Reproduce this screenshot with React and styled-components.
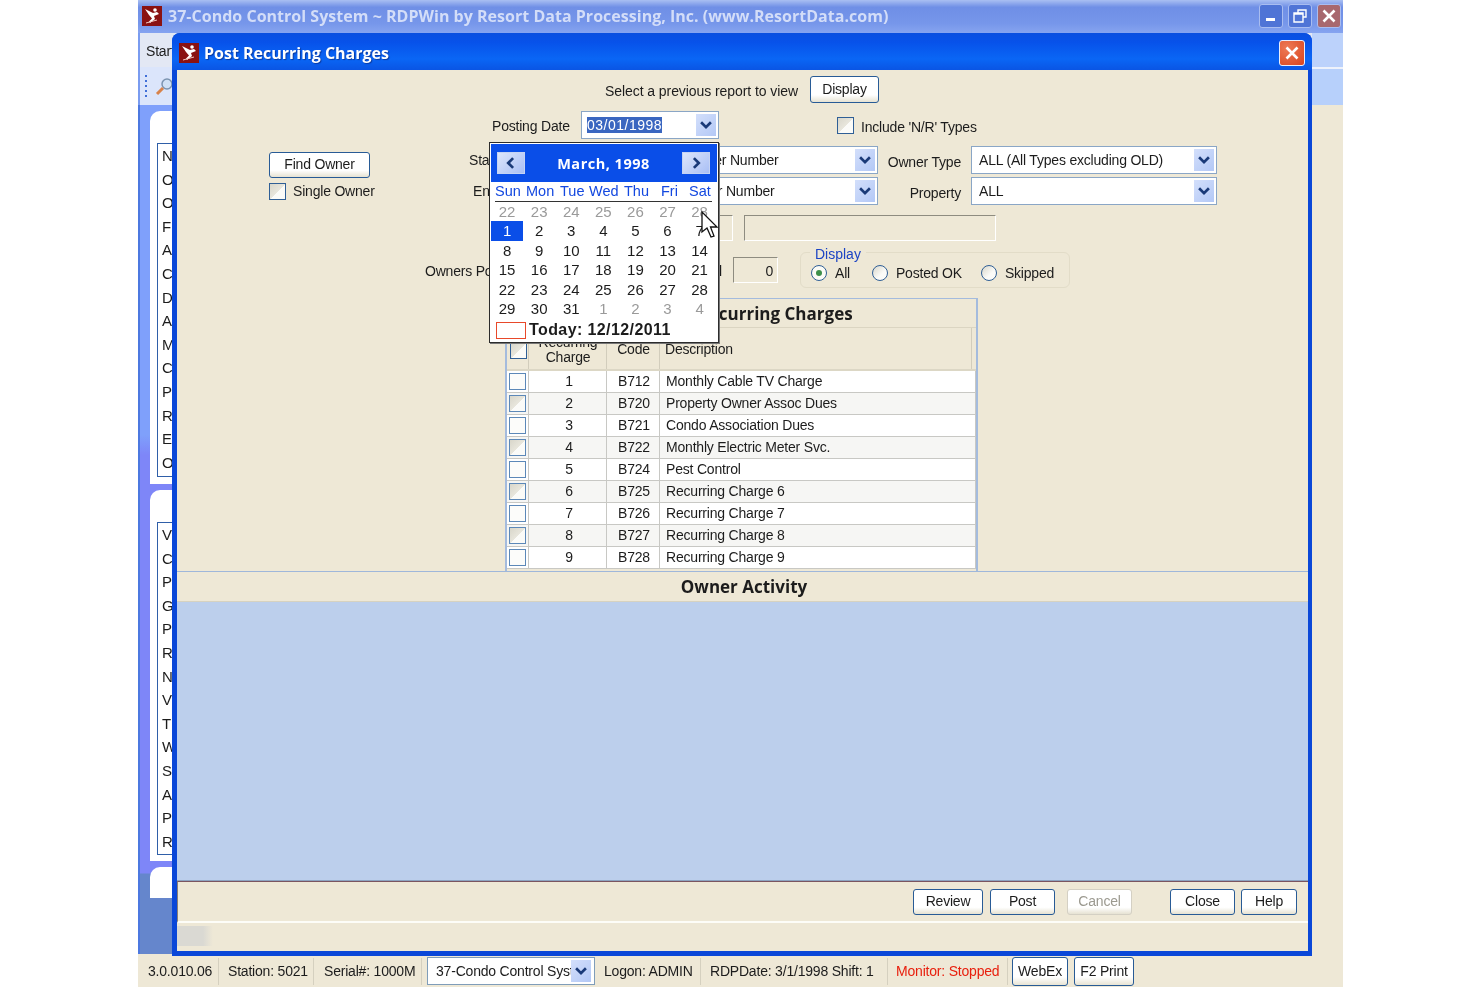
import React from "react";
import styled, { createGlobalStyle } from "styled-components";

const GlobalStyle = createGlobalStyle`
  html, body {
    margin: 0;
    padding: 0;
    background: #fff;
    font-family: "Liberation Sans", Arial, sans-serif;
    font-size: 14px;
    letter-spacing: -0.2px;
    color: #1c1c1c;
  }
`;

const Page = styled.div`
  width: 1480px;
  height: 987px;
  overflow: hidden;
  padding-left: 138px;
  box-sizing: border-box;
`;

const AppWindow = styled.div`
  position: relative;
  width: 1205px;
  height: 987px;
  display: flex;
  flex-direction: column;
  background: #eee8d6;
  filter: blur(0.35px);
`;

const AppTitle = styled.div`
  height: 33px;
  flex: none;
  display: flex;
  align-items: center;
  padding: 0 2px 1px 4px;
  box-sizing: border-box;
  background: linear-gradient(180deg, #a9bff2 0, #6f8fe6 22%, #7696ea 70%, #86a4f0 100%);
  color: #d3ddf8;
  font-family: "Open Sans", sans-serif;
  font-weight: 700;
  font-size: 16px;
  letter-spacing: 0.02px;
  white-space: nowrap;
`;

const AppTitleText = styled.span`
  margin-left: 6px;
  flex: 1;
`;

const WinBtn = styled.div`
  width: 24px;
  height: 24px;
  margin-left: 5px;
  border: 1px solid #a9bdf0;
  border-radius: 3px;
  box-sizing: border-box;
  background: ${(p) => (p.$red ? "#a8686e" : "#4f74d6")};
  display: flex;
  align-items: center;
  justify-content: center;
`;

const AppBody = styled.div`
  flex: 1;
  display: flex;
  min-height: 0;
`;

const LeftSide = styled.div`
  width: 1174px;
  flex: none;
  display: flex;
  flex-direction: column;
`;

const TabRow = styled.div`
  height: 34px;
  flex: none;
  background: #e3e8f4;
  border-left: 2px solid #7a9cf0;
  padding: 10px 0 0 6px;
  box-sizing: border-box;
  font-size: 14px;
`;

const ToolRow = styled.div`
  height: 38px;
  flex: none;
  background: #dbe5fb;
  border-left: 2px solid #7a9cf0;
  display: flex;
  align-items: center;
  gap: 8px;
  padding-left: 5px;
  box-sizing: border-box;
`;

const Grip = styled.div`
  width: 2px;
  height: 22px;
  background: repeating-linear-gradient(180deg, #3f6fd8 0 2px, transparent 2px 5px);
`;

const SideBar = styled.div`
  flex: 1;
  width: 34px;
  overflow: hidden;
  background: linear-gradient(180deg, #7fa0fb 0, #7fa0fb 330px, #7e86f8 350px, #7e86f8 768px, #6586cc 769px);
  border-left: 2px solid #4c78e0;
  padding: 6px 0 0 10px;
  box-sizing: border-box;
  display: flex;
  flex-direction: column;
  gap: 6px;
`;

const SidePanel = styled.div`
  background: #fff;
  border-radius: 10px 0 0 0;
  height: ${(p) => p.$h}px;
  flex: none;
  padding: ${(p) => p.$pad}px 0 0 7px;
  box-sizing: border-box;
`;

const SideList = styled.div`
  border: 1px solid #2f5fa8;
  border-right: none;
  height: ${(p) => p.$h}px;
  padding-left: 4px;
  box-sizing: border-box;
`;

const SideItem = styled.div`
  height: 23.6px;
  line-height: 23.6px;
  font-size: 15px;
`;

const Beyond = styled.div`
  flex: 1;
  display: flex;
  flex-direction: column;
`;

const Beyond1 = styled.div`
  height: 34px;
  background: #bcd2fb;
  border-bottom: 2px solid #eef2fb;
  flex: none;
`;

const Beyond2 = styled.div`
  height: 36px;
  background: #b7d0fb;
  flex: none;
`;

const StatusBar = styled.div`
  height: 33px;
  flex: none;
  display: flex;
  align-items: center;
  background: #eee8d6;
  font-size: 14px;
  white-space: nowrap;
`;

const StatusCell = styled.div`
  height: 27px;
  margin-top: 2px;
  box-sizing: border-box;
  width: ${(p) => p.$w}px;
  padding-left: ${(p) => p.$pad}px;
  line-height: 26px;
  color: ${(p) => p.$color || "#1c1c1c"};
  border-right: ${(p) => (p.$line ? "1px solid #d5d0bf" : "none")};
  flex: none;
`;

const StatusCombo = styled.div`
  width: 168px;
  height: 28px;
  margin-right: 9px;
  flex: none;
  border: 1px solid #7f9db9;
  background: #fff;
  display: flex;
  align-items: center;
  padding-left: 8px;
  box-sizing: border-box;
  overflow: hidden;
`;

const StatusComboText = styled.span`
  width: 135px;
  overflow: hidden;
  white-space: nowrap;
`;

const StatusBtn = styled.div`
  width: ${(p) => p.$w}px;
  margin-right: 6px;
  height: 29px;
  margin-top: 2px;
  line-height: 27px;
  text-align: center;
  border: 1.5px solid #285b96;
  border-radius: 3px;
  box-sizing: border-box;
  background: linear-gradient(180deg, #fff 70%, #e8e4d4);
  flex: none;
`;

const Dialog = styled.div`
  position: absolute;
  left: 34px;
  top: 33px;
  width: 1140px;
  height: 923px;
  display: flex;
  flex-direction: column;
  background: #0a47d8;
  border-radius: 8px 8px 0 0;
  padding: 0 4px 5px 5px;
  box-sizing: border-box;
`;

const DialogTitle = styled.div`
  height: 37px;
  flex: none;
  margin: 0 -4px 0 -5px;
  padding: 3px 7px 0 7px;
  box-sizing: border-box;
  display: flex;
  align-items: center;
  border-radius: 8px 8px 0 0;
  background: linear-gradient(180deg, #0a4fe0 0, #0752ea 25%, #0a66f5 70%, #0a55e4 100%);
  color: #fff;
  font-family: "Open Sans", sans-serif;
  font-weight: 700;
  font-size: 16px;
  letter-spacing: 0;
  text-shadow: 1px 1px 1px #0b3aa0;
`;

const DialogTitleText = styled.span`
  margin-left: 5px;
  flex: 1;
`;

const RedClose = styled.div`
  width: 26px;
  height: 26px;
  border: 1px solid #e8eefc;
  border-radius: 3px;
  box-sizing: border-box;
  background: radial-gradient(circle at 30% 30%, #ee7a55, #d8441f);
  display: flex;
  align-items: center;
  justify-content: center;
`;

const DialogBody = styled.div`
  position: relative;
  flex: 1;
  display: flex;
  flex-direction: column;
  background: #eee8d6;
  min-height: 0;
`;

const Form = styled.div`
  height: 501px;
  flex: none;
  padding-top: 6px;
  box-sizing: border-box;
  display: flex;
  flex-direction: column;
`;

const Row = styled.div`
  display: flex;
  align-items: center;
  height: ${(p) => p.$h}px;
  margin-top: ${(p) => p.$mt || 0}px;
  padding-left: ${(p) => p.$pl || 0}px;
  flex: none;
`;

const OwnerGrid = styled.div`
  display: grid;
  grid-template-columns: 200px 112px 297px 93px 246px;
  grid-template-rows: 28px 28px;
  row-gap: 3px;
  margin-top: 7px;
  padding-left: 92px;
  align-items: center;
`;

const Label = styled.span`
  white-space: nowrap;
  margin-left: ${(p) => p.$ml || 0}px;
  padding-top: ${(p) => p.$pt || 0}px;
  width: ${(p) => (p.$w ? `${p.$w}px` : "auto")};
  flex: none;
`;

const ReportLabel = styled(Label)`
  letter-spacing: -0.07px;
`;

const RightLabel = styled.span`
  text-align: right;
  padding-right: 10px;
  padding-top: 4px;
  white-space: nowrap;
`;

const Button = styled.div`
  width: ${(p) => p.$w}px;
  height: ${(p) => p.$h || 26}px;
  margin-left: ${(p) => p.$ml || 0}px;
  margin-top: ${(p) => p.$mt || 0}px;
  line-height: ${(p) => (p.$h || 26) - 3}px;
  text-align: center;
  border: 1.5px solid ${(p) => (p.$off ? "#d4d0c4" : "#285b96")};
  color: ${(p) => (p.$off ? "#9c9a90" : "#1c1c1c")};
  border-radius: 3px;
  box-sizing: border-box;
  background: linear-gradient(180deg, #fff 72%, #e6e2d2);
  flex: none;
`;

const Combo = styled.div`
  width: ${(p) => p.$w}px;
  height: 28px;
  margin-left: ${(p) => p.$ml || 0}px;
  border: 1px solid #8aa6c6;
  background: #fff;
  display: flex;
  align-items: center;
  justify-content: space-between;
  padding: 0 2px 0 ${(p) => p.$pad || 7}px;
  box-sizing: border-box;
  flex: none;
`;

const Selected = styled.span`
  background: #3a66c0;
  color: #fff;
  line-height: 16px;
  letter-spacing: 0.5px;
`;

const Arrow = styled.div`
  width: 20px;
  height: 22px;
  background: linear-gradient(135deg, #d3dffb, #b3c8f6);
  display: flex;
  align-items: center;
  justify-content: center;
  flex: none;
`;

const Check = styled.div`
  width: 17px;
  height: 17px;
  border: 1.5px solid ${(p) => (p.$soft ? "#5c88b8" : "#2f5f96")};
  box-sizing: border-box;
  margin-left: ${(p) => p.$ml || 0}px;
  background: ${(p) =>
    p.$plain ? "#fcfcfa" : "linear-gradient(135deg, #d8d6ca 0, #e8e6dc 50%, #fbfbf8 52%)"};
  flex: none;
`;

const CheckLabel = styled.div`
  display: flex;
  align-items: center;
  gap: 7px;
  margin-left: ${(p) => p.$ml || 0}px;
  padding-top: ${(p) => p.$pt || 0}px;
`;

const Sunken = styled.div`
  width: ${(p) => p.$w}px;
  height: ${(p) => p.$h}px;
  margin-left: ${(p) => p.$ml || 0}px;
  margin-top: ${(p) => p.$mt || 0}px;
  border: 1px solid #fff;
  border-top-color: #8e8c80;
  border-left-color: #8e8c80;
  box-sizing: border-box;
  text-align: right;
  padding: 5px 4px 0 0;
  flex: none;
`;

const Group = styled.div`
  position: relative;
  width: 270px;
  height: 36px;
  margin-left: 22px;
  margin-top: 2px;
  border: 1px solid #e2dcc8;
  border-radius: 6px;
  box-sizing: border-box;
  display: flex;
  align-items: center;
  padding: 6px 0 0 10px;
  flex: none;
`;

const Legend = styled.span`
  position: absolute;
  left: 9px;
  top: -7px;
  padding: 0 5px;
  background: #eee8d6;
  color: #1c44c4;
  letter-spacing: 0;
`;

const RadioWrap = styled.div`
  display: flex;
  align-items: center;
  gap: 8px;
  margin-right: ${(p) => p.$mr}px;
`;

const Radio = styled.div`
  width: 16px;
  height: 16px;
  border: 1.5px solid #2f5f96;
  border-radius: 50%;
  box-sizing: border-box;
  background: ${(p) => (p.$on ? "#fbfbf6" : "linear-gradient(135deg, #d8d6ca, #fbfbf8 60%)")};
  display: flex;
  align-items: center;
  justify-content: center;
  flex: none;
`;

const Dot = styled.div`
  width: 6px;
  height: 6px;
  border-radius: 50%;
  background: #3d8f4a;
`;

const TablePanel = styled.div`
  width: 473px;
  margin: 10px 0 0 328px;
  flex: 1;
  border: 2px solid #a4bbdd;
  border-bottom: none;
  border-top: 1px solid #a4bbdd;
  box-sizing: border-box;
  display: flex;
  flex-direction: column;
  background: #eee8d6;
`;

const BoldTitle = styled.div`
  height: ${(p) => p.$h}px;
  line-height: ${(p) => p.$h}px;
  flex: none;
  text-align: center;
  padding-left: ${(p) => p.$pl || 0}px;
  font-family: "Open Sans", sans-serif;
  font-weight: 700;
  font-size: 17px;
  letter-spacing: 0;
  color: #1c1c1c;
  box-sizing: border-box;
  border-bottom: 1px solid #dbd5c2;
`;

const TableHead = styled.div`
  height: 43px;
  flex: none;
  display: grid;
  grid-template-columns: 22px 78px 53px 1fr 4px;
  background: #eee8d6;
  border-bottom: 2px solid #dcd7c5;
  box-sizing: border-box;
`;

const HeadCell = styled.div`
  border-right: 1px solid #d2cdbc;
  text-align: ${(p) => p.$align || "center"};
  line-height: 15px;
  padding: ${(p) => p.$top}px 0 0 ${(p) => p.$pl || 0}px;
  overflow: hidden;
  box-sizing: border-box;
`;

const TableRow = styled.div`
  height: 22px;
  flex: none;
  display: grid;
  grid-template-columns: 22px 78px 53px 1fr;
  background: ${(p) => (p.$alt ? "#f6f6f4" : "#fff")};
  border-bottom: 1px solid #c8c8c4;
  box-sizing: border-box;
`;

const Cell = styled.div`
  border-right: 1px solid #c8c8c4;
  text-align: ${(p) => p.$align || "left"};
  line-height: 21px;
  padding-left: ${(p) => p.$pl || 0}px;
  display: ${(p) => (p.$box ? "flex" : "block")};
  align-items: center;
  justify-content: center;
  box-sizing: border-box;
  white-space: nowrap;
`;

const ActivityPanel = styled.div`
  height: 280px;
  flex: none;
  background: #bccfec;
  border-top: 1px solid #d6d2c0;
  border-bottom: 1px solid #8da3c0;
  box-sizing: border-box;
`;

const ActivityHead = styled(BoldTitle)`
  border-top: 1px solid #9fb7da;
  border-bottom: none;
`;

const ActionBar = styled.div`
  height: 42px;
  flex: none;
  display: flex;
  align-items: center;
  padding: 0 10px 0 735px;
  box-sizing: border-box;
  border-top: 1px solid #7a5560;
  border-left: 1px solid #8a7f74;
  border-bottom: 2px solid #fdfdf8;
`;

const BottomStrip = styled.div`
  flex: 1;
  background: linear-gradient(90deg, #dad9d3 0, #dad9d3 26px, #eee8d6 36px);
  background-size: 100% 20px;
  background-repeat: no-repeat;
  background-position: 0 3px;
`;

const Calendar = styled.div`
  position: absolute;
  left: 312px;
  top: 72px;
  width: 230px;
  height: 201px;
  border: 1px solid #2c2c2c;
  background: #fff;
  padding: 1px;
  box-sizing: border-box;
  box-shadow: 1px 1px 0 #777;
`;

const CalHead = styled.div`
  height: 38px;
  background: #0a4ee8;
  display: flex;
  align-items: center;
  justify-content: space-between;
  padding: 0 7px 0 6px;
  color: #fff;
  font-family: "Open Sans", sans-serif;
  font-weight: 700;
  font-size: 14.5px;
  letter-spacing: 0.5px;
`;

const CalNav = styled.div`
  width: 28px;
  height: 22px;
  background: linear-gradient(135deg, #dde6fb, #a9bff5);
  border: 1px solid #c5d3f3;
  box-sizing: border-box;
  display: flex;
  align-items: center;
  justify-content: center;
`;

const Weekdays = styled.div`
  margin: 1px 5px 0 4px;
  height: 18px;
  display: grid;
  grid-template-columns: 31px 34px 29px 35px 37px 28px 1fr;
  border-bottom: 1.5px solid #333;
  color: #1348e0;
  line-height: 17px;
  font-size: 14.5px;
  letter-spacing: 0;
`;

const DayGrid = styled.div`
  display: grid;
  grid-template-columns: repeat(7, 32.1px);
  grid-auto-rows: 19.4px;
`;

const Day = styled.div`
  text-align: center;
  line-height: 19px;
  font-size: 15px;
  letter-spacing: 0;
  background: ${(p) => (p.$sel ? "#0a4ee8" : "transparent")};
  color: ${(p) => (p.$sel ? "#fff" : p.$dim ? "#9a9a9a" : "#1c1c1c")};
`;

const TodayRow = styled.div`
  display: flex;
  align-items: center;
  gap: 3px;
  padding-left: 5px;
  margin-top: 3px;
  font-weight: 700;
  font-size: 16px;
  letter-spacing: 0.4px;
`;

const TodayBox = styled.div`
  width: 30px;
  height: 17px;
  border: 1.5px solid #e8492a;
  box-sizing: border-box;
`;

const Cursor = styled.svg`
  position: absolute;
  left: 524px;
  top: 141px;
`;

const Chevron = ({ dir = "down", size = 14 }) => {
  const d = {
    down: "M1.5 3 L5 6.5 L8.5 3",
    left: "M6.5 1.5 L3 5 L6.5 8.5",
    right: "M3.5 1.5 L7 5 L3.5 8.5",
  }[dir];
  return (
    <svg width={size} height={size} viewBox="0 0 10 10">
      <path d={d} fill="none" stroke="#1a3a78" strokeWidth="1.9" />
    </svg>
  );
};

const Logo = () => (
  <svg width="20" height="20" viewBox="0 0 20 20" style={{ flex: "none" }}>
    <rect width="20" height="20" fill="#8a1212" />
    <circle cx="13" cy="4" r="1.8" fill="#fff" />
    <path d="M3 3 L11 7 L15 6 L17 8 L12 10 L13 13 L8 17 L7 15.5 L10 12.5 L7 9 Z" fill="#fff" />
    <path d="M4 17 L15 14" stroke="#f3c9c0" strokeWidth="1" />
  </svg>
);

const XMark = ({ size = 16 }) => (
  <svg width={size} height={size} viewBox="0 0 16 16">
    <path d="M2.5 2.5 L13.5 13.5 M13.5 2.5 L2.5 13.5" stroke="#fff" strokeWidth="2.6" />
  </svg>
);

const LIST_ONE = ["N", "O", "O", "F", "A", "C", "D", "A", "M", "C", "P", "R", "E", "O"];
const LIST_TWO = ["V", "C", "P", "G", "P", "R", "N", "V", "T", "W", "S", "A", "P", "R"];

const CHARGES = [
  ["1", "B712", "Monthly Cable TV Charge"],
  ["2", "B720", "Property Owner Assoc Dues"],
  ["3", "B721", "Condo Association Dues"],
  ["4", "B722", "Monthly Electric Meter Svc."],
  ["5", "B724", "Pest Control"],
  ["6", "B725", "Recurring Charge 6"],
  ["7", "B726", "Recurring Charge 7"],
  ["8", "B727", "Recurring Charge 8"],
  ["9", "B728", "Recurring Charge 9"],
];

const WEEKDAYS = ["Sun", "Mon", "Tue", "Wed", "Thu", "Fri", "Sat"];

const DAYS = [
  ...[22, 23, 24, 25, 26, 27, 28].map((n) => ({ n, dim: true })),
  ...Array.from({ length: 31 }, (_, i) => ({ n: i + 1, sel: i === 0 })),
  ...[1, 2, 3, 4].map((n) => ({ n, dim: true })),
];

const App = () => {
  return (
    <Page>
      <GlobalStyle />
      <AppWindow>
        <AppTitle>
          <Logo />
          <AppTitleText>
            37-Condo Control System ~ RDPWin by Resort Data Processing, Inc. (www.ResortData.com)
          </AppTitleText>
          <WinBtn>
            <svg width="16" height="16" viewBox="0 0 16 16">
              <rect x="3" y="10" width="9" height="3" fill="#fff" />
            </svg>
          </WinBtn>
          <WinBtn>
            <svg width="16" height="16" viewBox="0 0 16 16">
              <path d="M6 4.5V2h8v7h-3M2 5h9v9H2z M2 6h9" fill="none" stroke="#fff" strokeWidth="1.4" />
            </svg>
          </WinBtn>
          <WinBtn $red>
            <XMark />
          </WinBtn>
        </AppTitle>

        <AppBody>
          <LeftSide>
            <TabRow>Start</TabRow>
            <ToolRow>
              <Grip />
              <svg width="20" height="20" viewBox="0 0 20 20">
                <circle cx="12" cy="8" r="5" fill="#cfe0f5" stroke="#7b93b0" strokeWidth="1.5" />
                <path d="M8 12 L2 18" stroke="#d8824a" strokeWidth="3" />
              </svg>
            </ToolRow>
            <SideBar>
              <SidePanel $h={373} $pad={32}>
                <SideList $h={334}>
                  {LIST_ONE.map((t, i) => (
                    <SideItem key={i}>{t}</SideItem>
                  ))}
                </SideList>
              </SidePanel>
              <SidePanel $h={371} $pad={32}>
                <SideList $h={333}>
                  {LIST_TWO.map((t, i) => (
                    <SideItem key={i}>{t}</SideItem>
                  ))}
                </SideList>
              </SidePanel>
              <SidePanel $h={31} $pad={0} />
            </SideBar>
          </LeftSide>
          <Beyond>
            <Beyond1 />
            <Beyond2 />
          </Beyond>
        </AppBody>

        <StatusBar>
          <StatusCell $w={81} $pad={10} $line>3.0.010.06</StatusCell>
          <StatusCell $w={95} $pad={9} $line>Station: 5021</StatusCell>
          <StatusCell $w={108} $pad={10} $line>Serial#: 1000M</StatusCell>
          <StatusCell $w={5} />
          <StatusCombo>
            <StatusComboText>37-Condo Control System</StatusComboText>
            <Arrow>
              <Chevron />
            </Arrow>
          </StatusCombo>
          <StatusCell $w={97} $line>Logon: ADMIN</StatusCell>
          <StatusCell $w={187} $pad={9} $line>RDPDate: 3/1/1998 Shift: 1</StatusCell>
          <StatusCell $w={120} $pad={8} $color="#e8200e" $line>Monitor: Stopped</StatusCell>
          <StatusCell $w={4} />
          <StatusBtn $w={56}>WebEx</StatusBtn>
          <StatusBtn $w={60}>F2 Print</StatusBtn>
        </StatusBar>

        <Dialog>
          <DialogTitle>
            <Logo />
            <DialogTitleText>Post Recurring Charges</DialogTitleText>
            <RedClose>
              <XMark />
            </RedClose>
          </DialogTitle>
          <DialogBody>
            <Form>
              <Row $h={27} $pl={428}>
                <ReportLabel $w={205} $pt={2}>Select a previous report to view</ReportLabel>
                <Button $w={69} $h={27}>Display</Button>
              </Row>
              <Row $h={28} $mt={8} $pl={315}>
                <Label $w={89} $pt={2}>Posting Date</Label>
                <Combo $w={138} $pad={5}>
                  <Selected>03/01/1998</Selected>
                  <Arrow>
                    <Chevron />
                  </Arrow>
                </Combo>
                <CheckLabel $ml={118}>
                  <Check />
                  <Label $pt={3}>Include 'N/R' Types</Label>
                </CheckLabel>
              </Row>
              <OwnerGrid>
                <Button $w={101} $mt={9}>Find Owner</Button>
                <Label>Start</Label>
                <Combo $w={297} $pad={104}>
                  <span>Owner Number</span>
                  <Arrow>
                    <Chevron />
                  </Arrow>
                </Combo>
                <RightLabel>Owner Type</RightLabel>
                <Combo $w={246}>
                  <span>ALL (All Types excluding OLD)</span>
                  <Arrow>
                    <Chevron />
                  </Arrow>
                </Combo>
                <CheckLabel>
                  <Check />
                  <span>Single Owner</span>
                </CheckLabel>
                <Label $ml={4}>End</Label>
                <Combo $w={297} $pad={100}>
                  <span>Owner Number</span>
                  <Arrow>
                    <Chevron />
                  </Arrow>
                </Combo>
                <RightLabel>Property</RightLabel>
                <Combo $w={246}>
                  <span>ALL</span>
                  <Arrow>
                    <Chevron />
                  </Arrow>
                </Combo>
              </OwnerGrid>
              <Row $h={26} $mt={10} $pl={404}>
                <Sunken $w={152} $h={26} />
                <Sunken $w={252} $h={26} $ml={11} />
              </Row>
              <Row $h={38} $mt={9} $pl={248}>
                <Label $w={294} $pt={4}>Owners Posted</Label>
                <Label $w={14} $pt={4}>l</Label>
                <Sunken $w={45} $h={26} $mt={2}>0</Sunken>
                <Group>
                  <Legend>Display</Legend>
                  <RadioWrap $mr={22}>
                    <Radio $on>
                      <Dot />
                    </Radio>
                    <span>All</span>
                  </RadioWrap>
                  <RadioWrap $mr={19}>
                    <Radio />
                    <span>Posted OK</span>
                  </RadioWrap>
                  <RadioWrap $mr={0}>
                    <Radio />
                    <span>Skipped</span>
                  </RadioWrap>
                </Group>
              </Row>
              <TablePanel>
                <BoldTitle $h={29} $pl={12}>Select Recurring Charges</BoldTitle>
                <TableHead>
                  <HeadCell $top={14}>
                    <Check $ml={3} />
                  </HeadCell>
                  <HeadCell $top={7} $pl={1}>Recurring<br />Charge</HeadCell>
                  <HeadCell $top={14} $pl={1}>Code</HeadCell>
                  <HeadCell $top={14} $align="left" $pl={5}>Description</HeadCell>
                  <div />
                </TableHead>
                {CHARGES.map(([no, code, text], i) => (
                  <TableRow key={no} $alt={i % 2 === 1}>
                    <Cell $box>
                      <Check $soft $plain={i % 2 === 0} />
                    </Cell>
                    <Cell $align="center" $pl={3}>{no}</Cell>
                    <Cell $align="center" $pl={2}>{code}</Cell>
                    <Cell $pl={6}>{text}</Cell>
                  </TableRow>
                ))}
              </TablePanel>
            </Form>
            <ActivityHead $h={30} $pl={3}>Owner Activity</ActivityHead>
            <ActivityPanel />
            <ActionBar>
              <Button $w={70}>Review</Button>
              <Button $w={65} $ml={7}>Post</Button>
              <Button $w={65} $ml={12} $off>Cancel</Button>
              <Button $w={65} $ml={38}>Close</Button>
              <Button $w={56} $ml={6}>Help</Button>
            </ActionBar>
            <BottomStrip />

            <Calendar>
              <CalHead>
                <CalNav>
                  <Chevron dir="left" />
                </CalNav>
                <span>March, 1998</span>
                <CalNav>
                  <Chevron dir="right" />
                </CalNav>
              </CalHead>
              <Weekdays>
                {WEEKDAYS.map((d) => (
                  <span key={d}>{d}</span>
                ))}
              </Weekdays>
              <DayGrid>
                {DAYS.map((d, i) => (
                  <Day key={i} $dim={d.dim} $sel={d.sel}>{d.n}</Day>
                ))}
              </DayGrid>
              <TodayRow>
                <TodayBox />
                <span>Today: 12/12/2011</span>
              </TodayRow>
            </Calendar>
            <Cursor width="18" height="28" viewBox="0 0 18 28">
              <path d="M1 1 L1 21 L6 17 L10 26 L13 25 L9.5 16 L16 16 Z" fill="#fff" stroke="#111" strokeWidth="1.3" />
            </Cursor>
          </DialogBody>
        </Dialog>
      </AppWindow>
    </Page>
  );
};

export default App;
